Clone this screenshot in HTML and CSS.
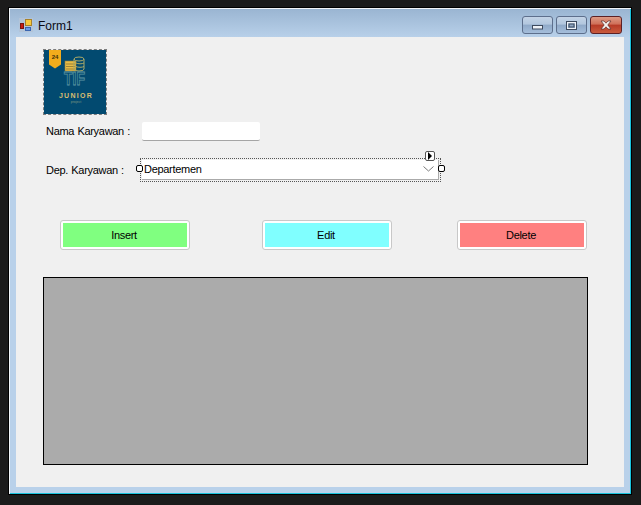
FILE: index.html
```html
<!DOCTYPE html>
<html lang="en">
<head>
<meta charset="utf-8">
<title>Form1</title>
<link rel="stylesheet" href="styles.css">
</head>
<body>
<div class="window">
  <div class="titlebar">
    <svg class="app-icon" width="14" height="14" viewBox="0 0 14 14">
      <rect width="14" height="14" fill="#b3c4d8"/>
      <rect x="1.500" y="5.500" width="3" height="5" fill="#c81c12" stroke="#7a1510"/>
      <rect x="6.500" y="1.500" width="6" height="6" fill="#f7c93c" stroke="#a8822a"/>
      <rect x="6.500" y="9.500" width="5" height="3" fill="#6a9ce8" stroke="#3a66b0"/>
    </svg>
    <span class="title">Form1</span>
    <div class="controls">
      <div class="ctl ctl-min"><svg width="11" height="5" viewBox="0 0 11 5"><rect x="0.500" y="0.500" width="10" height="3.500" fill="#eef2f7" stroke="#3d4a5e"/></svg></div>
      <div class="ctl ctl-max"><svg width="11" height="9" viewBox="0 0 11 9"><rect x="1" y="1" width="9" height="7" fill="none" stroke="#eef2f7" stroke-width="2"/><rect x="0.500" y="0.500" width="10" height="8" fill="none" stroke="#3d4a5e"/><rect x="3" y="3" width="5" height="3" fill="#8fa6c2" stroke="#3d4a5e"/></svg></div>
      <div class="ctl-close"><svg width="14" height="10" viewBox="0 0 14 10"><path d="M2 1h3l2 2.200L9 1h3L8.800 5 12 9H9L7 6.800 5 9H2l3.200-4z" fill="#f4f1ef" stroke="#5a2a28" stroke-width="0.700"/></svg></div>
    </div>
  </div>
  <div class="client">
    <div class="picture">
      <svg width="62" height="64" viewBox="0 0 62 64">
        <rect width="62" height="64" fill="#024a70"/>
        <path d="M5 0h12v14.500L11 18.500 5 14.500z" fill="#f2ac1c"/>
        <text x="11" y="8.500" class="pic-num">24</text>
        <rect x="21" y="11" width="11" height="10" fill="#e8bc45" stroke="#8e7a3c" stroke-width="0.600"/>
        <path d="M22 14h9M22 16.500h9M22 19h9" stroke="#7c6a30" stroke-width="0.700"/>
        <ellipse cx="35" cy="9" rx="5" ry="2" fill="none" stroke="#a8a868"/>
        <path d="M30 9v10a5 2 0 0 0 10 0V9M32 13a5 2 0 0 0 8 0M32 16.500a5 2 0 0 0 8 0" fill="none" stroke="#a8a868"/>
        <text x="20" y="35" class="pic-tif" textLength="21" lengthAdjust="spacingAndGlyphs">TIF</text>
        <text x="32" y="47.500" class="pic-junior">JUNIOR</text>
        <text x="32" y="52.500" class="pic-sub">project</text>
      </svg>
    </div>
    <div class="row row-name">
      <label class="lbl lbl-name">Nama Karyawan :</label>
      <div class="textbox"></div>
    </div>
    <div class="row row-dep">
      <label class="lbl lbl-dep">Dep. Karyawan :</label>
      <div class="selection">
        <div class="combo">
          <span>Departemen</span>
          <svg class="chev" width="11" height="6" viewBox="0 0 11 6"><path d="M0.500 0.500L5.500 5l5-4.500" fill="none" stroke="#7a7a7a"/></svg>
        </div>
        <span class="handle handle-l"></span>
        <span class="handle handle-r"></span>
        <span class="smarttag"><svg width="6" height="8" viewBox="0 0 6 8"><path d="M1 0l4 4-4 4z" fill="#000"/></svg></span>
      </div>
    </div>
    <div class="buttons">
      <div class="btn"><span class="btn-fill fill-green">Insert</span></div>
      <div class="btn btn-edit"><span class="btn-fill fill-cyan">Edit</span></div>
      <div class="btn btn-delete"><span class="btn-fill fill-red">Delete</span></div>
    </div>
    <div class="grid"></div>
  </div>
</div>
</body>
</html>
```
FILE: styles.css
```css
* { box-sizing: border-box; }
html, body { margin: 0; height: 100%; }
body {
  background: #1b1b1b;
  padding: 7px 0 0 8px;
  font-family: "Liberation Sans", Arial, sans-serif;
  font-size: 11px;
  letter-spacing: -0.3px;
  word-spacing: 0.5px;
  color: #000;
  overflow: hidden;
}
.window {
  width: 624px;
  height: 488px;
  border: 1px solid #000;
  background: linear-gradient(to bottom, #99b4d1 0, #b9d1ea 30px, #b9d1ea 100%);
  box-shadow: inset 1px 1px 0 #f2f6fa, inset -1px -1px 0 #19c3dc;
  padding: 1px 7px 7px 7px;
  display: flex;
  flex-direction: column;
}
.titlebar {
  height: 28px;
  padding: 4px 0 0 3px;
  display: flex;
  align-items: center;
  flex: none;
}
.app-icon { flex: none; }
.title { margin: 2px 0 0 5px; font-size: 12px; letter-spacing: 0; color: #0a0a14; }
.controls { margin-left: auto; display: flex; gap: 3px; margin-right: 2px; }
.ctl, .ctl-close {
  height: 18px;
  border-radius: 3px;
  display: flex;
  align-items: center;
  justify-content: center;
}
.ctl {
  width: 31px;
  border: 1px solid #5d6f8c;
  background: linear-gradient(to bottom, #c3d3e6 0, #b2c7de 45%, #8fa9c8 50%, #a5bedb 100%);
}
.ctl-min svg { margin-top: 5px; }
.ctl-close {
  width: 32px;
  border: 1px solid #5c2024;
  background: linear-gradient(to bottom, #dd9a85 0, #cf6f58 45%, #b63a26 50%, #c95b3e 100%);
}
.client {
  flex: 1;
  background: #f0f0f0;
  padding: 12px 36px 22px 27px;
  display: flex;
  flex-direction: column;
}
.picture {
  width: 64px;
  height: 66px;
  border: 1px dashed #7d7d7d;
  flex: none;
}
.picture svg { display: block; }
.pic-num { font: bold 6px "Liberation Sans", sans-serif; letter-spacing: 0; fill: #40300a; text-anchor: middle; }
.pic-tif { font: bold 18px "Liberation Sans", sans-serif; letter-spacing: 0; fill: none; stroke: #5f98a4; stroke-width: 0.800; }
.pic-junior { font: bold 7px "Liberation Sans", sans-serif; fill: #d8bd70; text-anchor: middle; letter-spacing: 1.300px; }
.pic-sub { font: 3.500px "Liberation Sans", sans-serif; letter-spacing: 0; fill: #7f9a80; text-anchor: middle; }
.row { display: flex; align-items: center; flex: none; }
.lbl { white-space: nowrap; }
.row-name { margin-top: 7px; height: 19px; }
.lbl-name { margin-left: 3px; width: 96px; padding-bottom: 2px; }
.textbox {
  width: 118px;
  height: 19px;
  background: #fff;
  border-bottom: 1px solid #a5a5a5;
  border-radius: 2px;
}
.row-dep { margin-top: 17px; height: 23px; }
.lbl-dep { margin-left: 3px; width: 94px; }
.selection {
  position: relative;
  width: 301px;
  height: 24px;
  border: 1px dotted #555;
  padding: 1px;
}
.combo {
  height: 20px;
  width: 297px;
  background: #fff;
  border-right: 1px solid #aaa;
  border-bottom: 1px solid #aaa;
  display: flex;
  align-items: center;
  justify-content: space-between;
  padding: 0 3px 0 2px;
}
.chev { margin-right: 1px; }
.handle {
  position: absolute;
  top: 6px;
  width: 7px;
  height: 7px;
  background: #fff;
  border: 1px solid #000;
  border-radius: 2px;
}
.handle-l { left: -5px; }
.handle-r { right: -5px; }
.smarttag {
  position: absolute;
  top: -8px;
  right: 5px;
  width: 10px;
  height: 10px;
  background: #fff;
  border: 1px solid #555;
  border-radius: 2px;
  display: flex;
  align-items: center;
  justify-content: center;
}
.buttons {
  margin-top: 39px;
  margin-left: 17px;
  display: flex;
  flex: none;
}
.btn {
  width: 130px;
  height: 30px;
  background: #fff;
  border: 1px solid #c8c8c8;
  border-radius: 3px;
  padding: 2px;
  display: flex;
}
.btn-edit { margin-left: 72px; }
.btn-delete { margin-left: 65px; }
.btn-fill { flex: 1; display: flex; align-items: center; justify-content: center; padding-right: 2px; }
.fill-green { background: #80ff80; }
.fill-cyan { background: #80ffff; }
.fill-red { background: #ff8080; }
.grid {
  margin-top: 27px;
  width: 545px;
  height: 188px;
  background: #ababab;
  border: 1px solid #000;
  flex: none;
}
```
